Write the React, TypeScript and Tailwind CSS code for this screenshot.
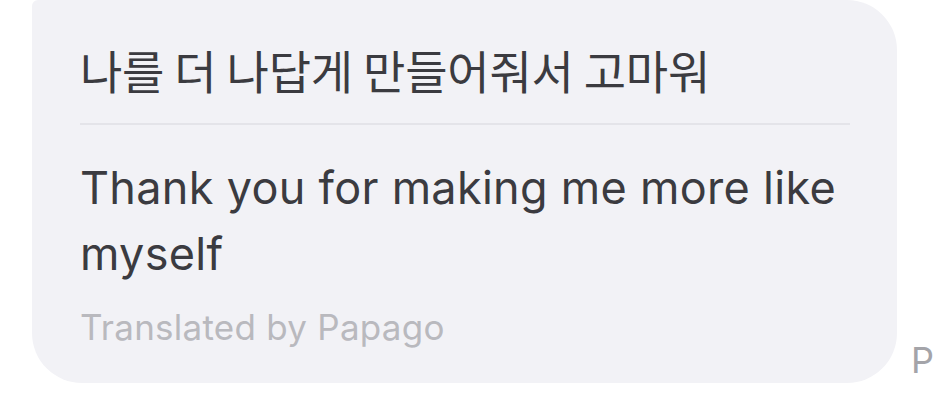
export default function App() {
    return (
        <div className="flex h-[408px] w-[934px] items-start overflow-hidden bg-white">
            {/* Translated message bubble */}
            <div className="ml-[32px] flex h-[383px] w-[865px] shrink-0 flex-col rounded-[50px] rounded-tl-[6px] bg-[#f2f2f6] pr-[47px] pl-[48px] text-[#3b3b40]">
                <p className="mt-[36px] font-['Noto_Sans_CJK_KR',sans-serif] text-[46px] leading-[66px] tracking-[-0.2px]">
                    나를 더 나답게 만들어줘서 고마워
                </p>
                <div className="mt-[21px] h-[2px] w-full bg-[#e4e4e9]"></div>
                <p className="mt-[30px] font-['Inter',sans-serif] text-[45px] leading-[66px] tracking-[0.3px]">
                    Thank you for making me more like myself
                </p>
                <p className="mt-[20px] font-['Inter',sans-serif] text-[35px] leading-[40px] tracking-[0.25px] text-[#b9b9be]">
                    Translated by Papago
                </p>
            </div>
            <span className="mt-[340px] ml-[14px] shrink-0 font-['Inter',sans-serif] text-[36px] leading-[40px] text-[#a4a4a9]">
                P
            </span>
        </div>
    );
}
